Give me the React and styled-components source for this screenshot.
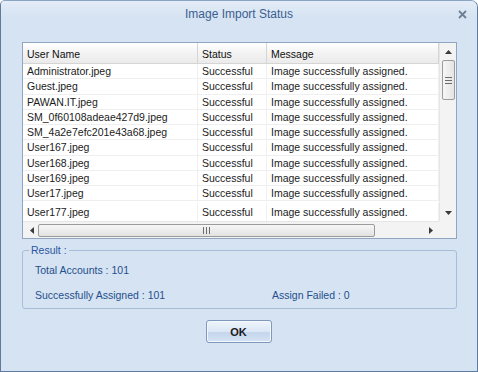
import React from "react";
import styled, { createGlobalStyle } from "styled-components";

const GlobalStyle = createGlobalStyle`
  html, body {
    margin: 0;
    padding: 0;
    background: #ffffff;
  }
  body {
    font-family: "Liberation Sans", Arial, sans-serif;
  }
`;

const rows = [
  "Administrator.jpeg",
  "Guest.jpeg",
  "PAWAN.IT.jpeg",
  "SM_0f60108adeae427d9.jpeg",
  "SM_4a2e7efc201e43a68.jpeg",
  "User167.jpeg",
  "User168.jpeg",
  "User169.jpeg",
  "User17.jpeg",
  "User177.jpeg",
];

const Window = styled.div`
  width: 478px;
  height: 372px;
  box-sizing: border-box;
  display: flex;
  flex-direction: column;
  background: #d6e3f2;
  border: 1px solid #5f7c9e;
  border-top-color: #8aa4c4;
  border-radius: 5px 7px 0 0;
  overflow: hidden;
`;

const TitleBar = styled.div`
  height: 26px;
  flex-shrink: 0;
  position: relative;
  display: flex;
  align-items: center;
  justify-content: center;
  background: linear-gradient(#e4edf8, #d6e3f2 60%, #d6e3f2);
`;

const Title = styled.div`
  font-size: 12px;
  color: #3b5e90;
`;

const Close = styled.div`
  position: absolute;
  right: 10px;
  top: 9px;
  width: 9px;
  height: 9px;
  display: flex;
`;

const Body = styled.div`
  flex: 1;
  display: flex;
  flex-direction: column;
  padding: 15px 20px 0 21px;
`;

const Grid = styled.div`
  height: 197px;
  flex-shrink: 0;
  box-sizing: border-box;
  border: 1px solid #8fa5c0;
  background: #ffffff;
  display: grid;
  grid-template-columns: 1fr 17px;
  grid-template-rows: 1fr 17px;
`;

const Table = styled.div`
  overflow: hidden;
  display: flex;
  flex-direction: column;
`;

const HeaderRow = styled.div`
  display: grid;
  grid-template-columns: 175px 69px 1fr;
  height: 21px;
  flex-shrink: 0;
  box-sizing: border-box;
  background: linear-gradient(#ffffff, #f3f3f3 50%, #ebebeb);
  border-bottom: 1px solid #d5d5d5;
`;

const HeadCell = styled.div`
  font-size: 10.5px;
  color: #101010;
  padding-left: 4px;
  padding-top: 1px;
  display: flex;
  align-items: center;
  border-right: 1px solid #d5d5d5;
`;

const Row = styled.div`
  display: grid;
  grid-template-columns: 175px 69px 1fr;
  height: ${({ $tall }) => ($tall ? "21px" : "15.25px")};
  flex-shrink: 0;
  box-sizing: border-box;
  border-bottom: 1px solid #efefef;
  padding-top: ${({ $tall }) => ($tall ? "2px" : "0")};
`;

const Cell = styled.div`
  font-size: 10.5px;
  color: #1b1b1b;
  padding-left: 4px;
  display: flex;
  align-items: center;
  white-space: nowrap;
  border-right: 1px solid #f0f0f0;
`;

const VScroll = styled.div`
  background: #f3f3f3;
  border-left: 1px solid #e6e6e6;
  display: flex;
  flex-direction: column;
  align-items: center;
`;

const HScroll = styled.div`
  background: #f3f3f3;
  border-top: 1px solid #e6e6e6;
  display: flex;
  align-items: center;
`;

const Corner = styled.div`
  background: #f3f3f3;
`;

const Arrow = styled.div`
  width: 17px;
  height: 17px;
  flex-shrink: 0;
  display: flex;
  align-items: center;
  justify-content: center;
`;

const Spacer = styled.div`
  flex: 1;
`;

const VThumb = styled.div`
  width: 13px;
  height: 40px;
  box-sizing: border-box;
  border: 1px solid #9b9b9b;
  border-radius: 2px;
  background: linear-gradient(90deg, #f6f6f6, #e4e4e4);
  display: flex;
  align-items: center;
  justify-content: center;
`;

const HThumb = styled.div`
  width: 337px;
  height: 13px;
  margin-left: -2px;
  box-sizing: border-box;
  border: 1px solid #9b9b9b;
  border-radius: 2px;
  background: linear-gradient(#f6f6f6, #e2e2e2);
  display: flex;
  align-items: center;
  justify-content: center;
`;

const HTrack = styled.div`
  flex: 1;
  display: flex;
  align-items: center;
`;

const ResultBox = styled.fieldset`
  margin: 5px 0 0 0;
  padding: 3px 0 0 12px;
  height: 65px;
  box-sizing: border-box;
  border: 1px solid #a8bdd7;
  border-radius: 3px;
  display: grid;
  grid-template-columns: 237px 1fr;
  grid-template-rows: 22px 22px;
  row-gap: 3px;
`;

const Legend = styled.legend`
  font-size: 10.5px;
  color: #2b55a0;
  padding: 0 2px;
  margin-left: -6px;
`;

const Stat = styled.div`
  font-size: 10.5px;
  color: #244f8c;
  display: flex;
  align-items: center;
`;

const Footer = styled.div`
  display: flex;
  justify-content: center;
  padding-top: 11px;
  padding-right: 2px;
`;

const OkButton = styled.button`
  width: 66px;
  height: 23px;
  border: 1px solid #7e98bb;
  border-radius: 3px;
  background: linear-gradient(#eef4fb, #dbe7f5 50%, #c5d6ec 55%, #d4e2f3);
  font-family: "Liberation Sans", Arial, sans-serif;
  font-size: 11px;
  font-weight: bold;
  color: #1a1a1a;
  box-shadow: inset 0 0 0 1px #f4f8fd;
`;

const Tri = ({ dir }) => {
  const pts = {
    up: "0,4 3.5,0 7,4",
    down: "0,0 3.5,4 7,0",
    left: "4,0 0,3.5 4,7",
    right: "0,0 4,3.5 0,7",
  }[dir];
  const vertical = dir === "up" || dir === "down";
  return (
    <svg width={vertical ? 7 : 4} height={vertical ? 4 : 7}>
      <polygon points={pts} fill="#3a3a3a" />
    </svg>
  );
};

const Grip = ({ vertical }) => (
  <svg width="7" height="7">
    {[0, 3, 6].map((o) =>
      vertical ? (
        <rect key={o} x="0" y={o} width="7" height="1" fill="#6b6b6b" />
      ) : (
        <rect key={o} x={o} y="0" width="1" height="7" fill="#6b6b6b" />
      )
    )}
  </svg>
);

const App = () => {
  return (
    <>
      <GlobalStyle />
      <Window>
        <TitleBar>
          <Title>Image Import Status</Title>
          <Close>
            <svg width="9" height="9" viewBox="0 0 9 9">
              <path
                d="M1 1 L8 8 M8 1 L1 8"
                stroke="#6f7f94"
                strokeWidth="1.8"
              />
            </svg>
          </Close>
        </TitleBar>
        <Body>
          <Grid>
            <Table>
              <HeaderRow>
                <HeadCell>User Name</HeadCell>
                <HeadCell>Status</HeadCell>
                <HeadCell>Message</HeadCell>
              </HeaderRow>
              {rows.map((name, i) => (
                <Row key={name} $tall={i === rows.length - 1}>
                  <Cell>{name}</Cell>
                  <Cell>Successful</Cell>
                  <Cell>Image successfully assigned.</Cell>
                </Row>
              ))}
            </Table>
            <VScroll>
              <Arrow>
                <Tri dir="up" />
              </Arrow>
              <VThumb>
                <Grip vertical />
              </VThumb>
              <Spacer />
              <Arrow>
                <Tri dir="down" />
              </Arrow>
            </VScroll>
            <HScroll>
              <Arrow>
                <Tri dir="left" />
              </Arrow>
              <HTrack>
                <HThumb>
                  <Grip />
                </HThumb>
              </HTrack>
              <Arrow>
                <Tri dir="right" />
              </Arrow>
            </HScroll>
            <Corner />
          </Grid>
          <ResultBox>
            <Legend>Result :</Legend>
            <Stat>Total Accounts : 101</Stat>
            <Stat />
            <Stat>Successfully Assigned : 101</Stat>
            <Stat>Assign Failed : 0</Stat>
          </ResultBox>
          <Footer>
            <OkButton>OK</OkButton>
          </Footer>
        </Body>
      </Window>
    </>
  );
};

export default App;
